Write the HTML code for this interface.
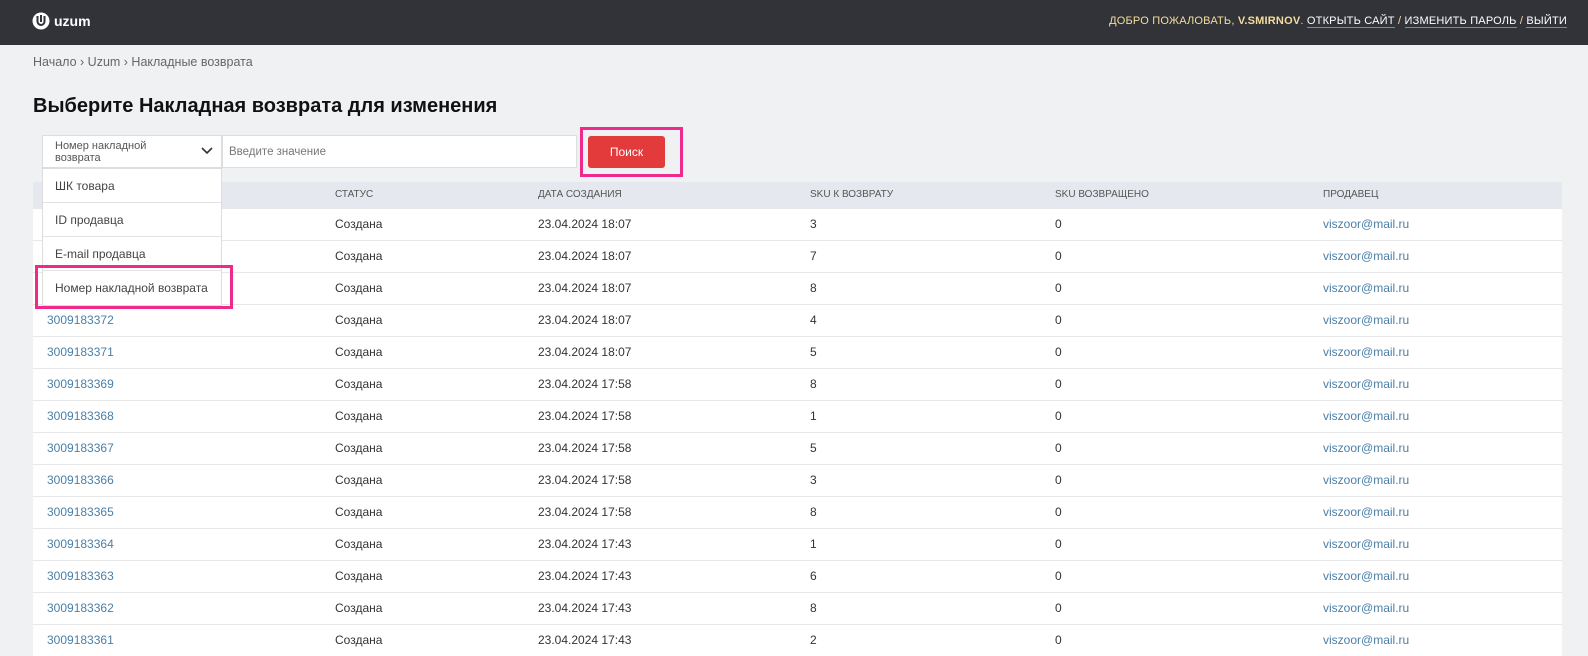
<!DOCTYPE html>
<html><head><meta charset="utf-8"><style>
*{margin:0;padding:0;box-sizing:border-box}
body{width:1588px;height:636px;overflow:hidden;background:#f0f1f3;font-family:"Liberation Sans","Noto Sans CJK SC",sans-serif;position:relative;color:#333}
.top{position:absolute;left:0;top:0;width:1588px;height:45px;background:#313338}
.logo{position:absolute;left:32px;top:12px;display:flex;align-items:center;color:#fff;font-weight:bold;font-size:14px}
.user{position:absolute;right:21px;top:15px;font-size:11px;color:#f5dd9c;letter-spacing:.2px}
.user b{color:#f5dd9c}
.user a{color:#fff;border-bottom:1px solid #888;text-decoration:none}
.bc{position:absolute;left:33px;top:55px;font-size:12.5px;color:#666}
h1{position:absolute;left:33px;top:95px;font-size:20px;font-weight:bold;color:#111}
.sel{position:absolute;left:42px;top:135px;width:180px;height:33px;background:#fff;border:1px solid #ddd;font-size:11px;color:#555;padding:4px 12px;line-height:12px}
.inp{position:absolute;left:222px;top:135px;width:355px;height:33px;background:#fff;border:1px solid #ddd;font-size:11.5px;color:#777;padding:10px 6px}
.hl{position:absolute;border:3px solid #ee2a8c}
.btn{position:absolute;left:588px;top:136px;width:77px;height:32px;background:#e33b3b;border-radius:3px;color:#fff;font-size:12px;text-align:center;line-height:32px}
table{position:absolute;left:33px;top:182px;width:1529px;border-collapse:collapse;font-size:12px}
th{height:26px;background:#e5e8ee;font-weight:normal;color:#555;font-size:10px;text-align:left}
td{height:32px;background:#fff;border-top:1px solid #e8e8e8;color:#333;text-align:left}
td a,.lk{color:#4a7fa7;text-decoration:none}
.dd{position:absolute;left:42px;top:168px;width:180px;background:#fff;border:1px solid #ddd;font-size:12px;color:#444}
.dd div{height:34px;line-height:34px;padding-left:12px;border-bottom:1px solid #e2e2e2}
</style></head><body>
<div class="top">
<div class="logo"><svg width="18" height="18" viewBox="0 0 18 18"><circle cx="9" cy="9" r="8.5" fill="#fff"/><path d="M5.5 4v5.5a3.5 3.5 0 0 0 7 0V4" stroke="#313338" stroke-width="2" fill="none"/><path d="M9 3v7" stroke="#313338" stroke-width="2"/></svg><span style="margin-left:4px">uzum</span></div>
<div class="user">ДОБРО ПОЖАЛОВАТЬ, <b>V.SMIRNOV</b>. <a>ОТКРЫТЬ САЙТ</a> / <a>ИЗМЕНИТЬ ПАРОЛЬ</a> / <a>ВЫЙТИ</a></div>
</div>
<div class="bc">Начало › Uzum › Накладные возврата</div>
<h1>Выберите Накладная возврата для изменения</h1>
<table>
<tr><th style="width:289px;padding-left:14px"></th><th style="width:203px;padding-left:13px">СТАТУС</th><th style="width:272px;padding-left:13px">ДАТА СОЗДАНИЯ</th><th style="width:245px;padding-left:13px">SKU К ВОЗВРАТУ</th><th style="width:268px;padding-left:13px">SKU ВОЗВРАЩЕНО</th><th style="padding-left:13px">ПРОДАВЕЦ</th></tr>
<tr><td style="padding-left:14px"><a>3009183375</a></td><td style="padding-left:13px">Создана</td><td style="padding-left:13px">23.04.2024 18:07</td><td style="padding-left:13px">3</td><td style="padding-left:13px">0</td><td style="padding-left:13px"><a>viszoor@mail.ru</a></td></tr>
<tr><td style="padding-left:14px"><a>3009183374</a></td><td style="padding-left:13px">Создана</td><td style="padding-left:13px">23.04.2024 18:07</td><td style="padding-left:13px">7</td><td style="padding-left:13px">0</td><td style="padding-left:13px"><a>viszoor@mail.ru</a></td></tr>
<tr><td style="padding-left:14px"><a>3009183373</a></td><td style="padding-left:13px">Создана</td><td style="padding-left:13px">23.04.2024 18:07</td><td style="padding-left:13px">8</td><td style="padding-left:13px">0</td><td style="padding-left:13px"><a>viszoor@mail.ru</a></td></tr>
<tr><td style="padding-left:14px"><a>3009183372</a></td><td style="padding-left:13px">Создана</td><td style="padding-left:13px">23.04.2024 18:07</td><td style="padding-left:13px">4</td><td style="padding-left:13px">0</td><td style="padding-left:13px"><a>viszoor@mail.ru</a></td></tr>
<tr><td style="padding-left:14px"><a>3009183371</a></td><td style="padding-left:13px">Создана</td><td style="padding-left:13px">23.04.2024 18:07</td><td style="padding-left:13px">5</td><td style="padding-left:13px">0</td><td style="padding-left:13px"><a>viszoor@mail.ru</a></td></tr>
<tr><td style="padding-left:14px"><a>3009183369</a></td><td style="padding-left:13px">Создана</td><td style="padding-left:13px">23.04.2024 17:58</td><td style="padding-left:13px">8</td><td style="padding-left:13px">0</td><td style="padding-left:13px"><a>viszoor@mail.ru</a></td></tr>
<tr><td style="padding-left:14px"><a>3009183368</a></td><td style="padding-left:13px">Создана</td><td style="padding-left:13px">23.04.2024 17:58</td><td style="padding-left:13px">1</td><td style="padding-left:13px">0</td><td style="padding-left:13px"><a>viszoor@mail.ru</a></td></tr>
<tr><td style="padding-left:14px"><a>3009183367</a></td><td style="padding-left:13px">Создана</td><td style="padding-left:13px">23.04.2024 17:58</td><td style="padding-left:13px">5</td><td style="padding-left:13px">0</td><td style="padding-left:13px"><a>viszoor@mail.ru</a></td></tr>
<tr><td style="padding-left:14px"><a>3009183366</a></td><td style="padding-left:13px">Создана</td><td style="padding-left:13px">23.04.2024 17:58</td><td style="padding-left:13px">3</td><td style="padding-left:13px">0</td><td style="padding-left:13px"><a>viszoor@mail.ru</a></td></tr>
<tr><td style="padding-left:14px"><a>3009183365</a></td><td style="padding-left:13px">Создана</td><td style="padding-left:13px">23.04.2024 17:58</td><td style="padding-left:13px">8</td><td style="padding-left:13px">0</td><td style="padding-left:13px"><a>viszoor@mail.ru</a></td></tr>
<tr><td style="padding-left:14px"><a>3009183364</a></td><td style="padding-left:13px">Создана</td><td style="padding-left:13px">23.04.2024 17:43</td><td style="padding-left:13px">1</td><td style="padding-left:13px">0</td><td style="padding-left:13px"><a>viszoor@mail.ru</a></td></tr>
<tr><td style="padding-left:14px"><a>3009183363</a></td><td style="padding-left:13px">Создана</td><td style="padding-left:13px">23.04.2024 17:43</td><td style="padding-left:13px">6</td><td style="padding-left:13px">0</td><td style="padding-left:13px"><a>viszoor@mail.ru</a></td></tr>
<tr><td style="padding-left:14px"><a>3009183362</a></td><td style="padding-left:13px">Создана</td><td style="padding-left:13px">23.04.2024 17:43</td><td style="padding-left:13px">8</td><td style="padding-left:13px">0</td><td style="padding-left:13px"><a>viszoor@mail.ru</a></td></tr>
<tr><td style="padding-left:14px"><a>3009183361</a></td><td style="padding-left:13px">Создана</td><td style="padding-left:13px">23.04.2024 17:43</td><td style="padding-left:13px">2</td><td style="padding-left:13px">0</td><td style="padding-left:13px"><a>viszoor@mail.ru</a></td></tr>
</table>
<div class="sel">Номер накладной<br>возврата<svg style="position:absolute;right:8px;top:11px" width="12" height="8" viewBox="0 0 12 8"><path d="M1 1l5 5 5-5" stroke="#333" stroke-width="1.6" fill="none"/></svg></div>
<div class="inp">Введите значение</div>
<div class="btn">Поиск</div>
<div class="hl" style="left:580px;top:127px;width:103px;height:50px"></div>
<div class="dd"><div>ШК товара</div><div>ID продавца</div><div>E-mail продавца</div><div style="border-bottom:none">Номер накладной возврата</div></div>
<div class="hl" style="left:35px;top:265px;width:198px;height:44px"></div>
</body></html>
